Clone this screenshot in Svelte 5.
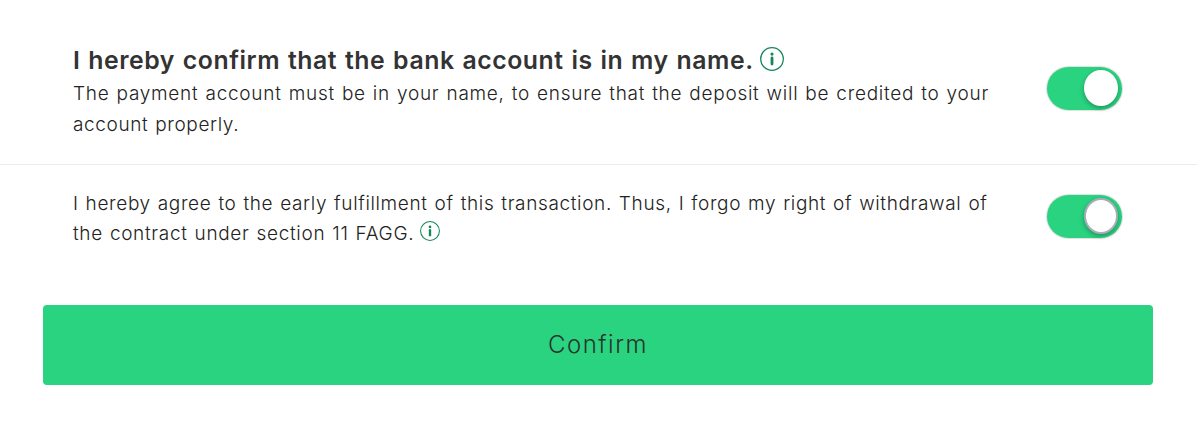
<script lang="ts">
  let nameConfirmed = $state(true);
  let agreed = $state(true);
</script>

{#snippet infoIcon(size: number)}
  <svg class="info-icon" width={size} height={size} viewBox="0 0 24 24" aria-label="Info">
    <circle cx="12" cy="12" r="11.3" fill="none" stroke="currentColor" stroke-width="1.25" />
    <circle cx="12" cy="7.1" r="1.6" fill="currentColor" />
    <path d="M12 11v6" fill="none" stroke="currentColor" stroke-width="2.8" stroke-linecap="round" />
  </svg>
{/snippet}

<form class="confirmation" onsubmit={(e) => e.preventDefault()}>
  <div class="row">
    <div class="text">
      <h2>I hereby confirm that the bank account is in my name. {@render infoIcon(24)}</h2>
      <p>
        <span class="payment">The payment account must be in your name, to ensure that the deposit will be credited to your</span><br />
        <span class="short">account properly.</span>
      </p>
    </div>
    <button
      type="button"
      class="toggle"
      class:on={nameConfirmed}
      role="switch"
      aria-checked={nameConfirmed}
      aria-label="Bank account is in my name"
      onclick={() => (nameConfirmed = !nameConfirmed)}
    >
      <span class="knob"></span>
    </button>
  </div>

  <div class="row agreement">
    <div class="text">
      <p>
        <span class="agree">I hereby agree to the early fulfillment of this transaction. Thus, I forgo my right of withdrawal of</span><br />
        <span class="contract">the contract under section 11 FAGG.</span>
        {@render infoIcon(20)}
      </p>
    </div>
    <button
      type="button"
      class="toggle"
      class:on={agreed}
      role="switch"
      aria-checked={agreed}
      aria-label="Agree to early fulfillment"
      onclick={() => (agreed = !agreed)}
    >
      <span class="knob outlined"></span>
    </button>
  </div>

  <button type="submit" class="confirm">Confirm</button>
</form>

<style>
  :global(body) {
    background: #fff;
  }

  .confirmation {
    box-sizing: border-box;
    height: 432px;
    font-family: Inter, 'Liberation Sans', sans-serif;
    color: #222;
  }

  .row {
    box-sizing: border-box;
    display: flex;
    align-items: flex-start;
    justify-content: space-between;
    height: 165px;
    padding: 44px 75px 0 73px;
    border-bottom: 1px solid #ebebeb;
  }

  .agreement {
    height: 140px;
    padding-top: 24px;
    border-bottom: none;
  }

  .text {
    white-space: nowrap;
  }

  h2 {
    margin: 0 0 2px;
    font-size: 24.8px;
    font-weight: 600;
    line-height: 32px;
    letter-spacing: 0.56px;
    word-spacing: 1px;
    color: #333;
  }

  p {
    margin: 0;
    font-size: 19px;
    font-weight: 300;
    line-height: 31px;
    letter-spacing: 0.67px;
    word-spacing: 1px;
  }

  .payment {
    letter-spacing: 0.73px;
  }

  .short {
    letter-spacing: 0.62px;
  }

  .agree {
    letter-spacing: 0.64px;
  }

  .agreement p {
    line-height: 30px;
  }

  .info-icon {
    overflow: visible;
    margin-left: -1px;
    color: #12875a;
    vertical-align: -2px;
  }

  .agreement .info-icon {
    vertical-align: -1px;
  }

  .toggle {
    box-sizing: border-box;
    display: flex;
    flex-shrink: 0;
    width: 75px;
    height: 43px;
    margin: 23px 0 0;
    padding: 3px 4px 3px 3px;
    border: none;
    border-radius: 22px;
    background: #ccc;
    box-shadow: 0 0 1px 1px rgba(0, 0, 0, 0.13);
    cursor: pointer;
  }

  .agreement .toggle {
    margin-top: 6px;
  }

  .toggle.on {
    justify-content: flex-end;
    background: #29d380;
  }

  .knob {
    box-sizing: border-box;
    width: 34px;
    height: 36px;
    border-radius: 50%;
    background: #fff;
    box-shadow: 0 2px 5px rgba(0, 0, 0, 0.3);
  }

  .knob.outlined {
    border: 2px solid #a9adb9;
  }

  .confirm {
    display: block;
    width: 1110px;
    height: 80px;
    margin: 0 0 0 43px;
    padding: 0 0 2px;
    border: none;
    border-radius: 4px;
    background: #29d380;
    color: #2a332e;
    font-family: inherit;
    font-size: 24px;
    font-weight: 300;
    letter-spacing: 1.5px;
    cursor: pointer;
  }
</style>
